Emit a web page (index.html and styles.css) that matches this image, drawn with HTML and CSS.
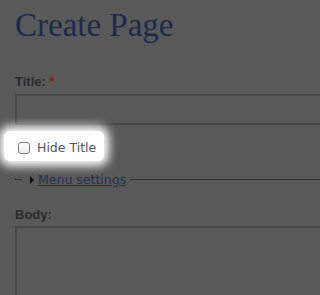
FILE: index.html
```html
<!DOCTYPE html>
<html lang="en">
<head>
<meta charset="utf-8">
<title>Create Page</title>
<link rel="stylesheet" href="styles.css">
</head>
<body>
<div class="page">
  <h1 class="title">Create Page</h1>
  <label class="label" for="title">Title: <span class="req">*</span></label>
  <input class="text-input" id="title" type="text">
  <div class="spotlight">
    <input class="cb" id="hide" type="checkbox">
    <label class="cb-label" for="hide">Hide Title</label>
  </div>
  <fieldset class="menu">
    <legend class="legend"><span class="arrow"></span><a class="legend-link" href="#">Menu settings</a></legend>
  </fieldset>
  <label class="label body-label" for="body">Body:</label>
  <textarea class="text-area" id="body"></textarea>
</div>
</body>
</html>
```

FILE: styles.css
```css
html, body {
  margin: 0;
  padding: 0;
  background: #595959;
  overflow: hidden;
}
body {
  height: 295px;
}
.page {
  padding: 5px 0 0 15px;
  display: flex;
  flex-direction: column;
  align-items: stretch;
}
.title {
  margin: 0;
  font: normal 33px/40px "Liberation Serif", serif;
  letter-spacing: 0;
  color: #1b2b4c;
}
.label {
  align-self: flex-start;
  margin-top: 29px;
  font: bold 13px/16px "Liberation Sans", sans-serif;
  color: #2a2a2a;
}
.req {
  color: #8a1b1b;
}
.text-input {
  box-sizing: border-box;
  margin: 4px 0 0 0;
  height: 31px;
  border: 2px solid #474747;
  border-right: none;
  background: transparent;
  padding: 0;
}
.spotlight {
  align-self: flex-start;
  box-sizing: border-box;
  margin: 6px 0 0 -11px;
  width: 100px;
  height: 30px;
  padding: 9px 0 0 14px;
  display: flex;
  align-items: flex-start;
  gap: 7px;
  background: #fff;
  border-radius: 6px;
  box-shadow: 0 0 10px 5px #fff;
}
.cb {
  appearance: none;
  -webkit-appearance: none;
  box-sizing: border-box;
  margin: 2px 0 0 0;
  width: 12px;
  height: 12px;
  border: 1px solid #808080;
  border-radius: 3px;
  background: linear-gradient(#ffffff, #ececec);
}
.cb-label {
  font: 12.5px/15px "DejaVu Sans", sans-serif;
  color: #555;
}
.menu {
  margin: 11px 0 0 0;
  padding: 0 0 0 7px;
  border: none;
  border-top: 1px solid #2e2e2e;
  min-width: 0;
}
.legend {
  padding: 0 4px;
  font: 12.5px/15px "DejaVu Sans", sans-serif;
  display: flex;
  align-items: center;
}
.arrow {
  width: 0;
  height: 0;
  margin: 0 4px 0 4px;
  border-left: 4px solid #111;
  border-top: 4px solid transparent;
  border-bottom: 4px solid transparent;
}
.legend-link {
  color: #1e3452;
  text-decoration: underline;
}
.body-label {
  margin-top: 20px;
}
.text-area {
  box-sizing: border-box;
  margin: 3px 0 0 0;
  height: 72px;
  border: 2px solid #474747;
  border-right: none;
  border-bottom: none;
  background: transparent;
  padding: 0;
  resize: none;
}
```
